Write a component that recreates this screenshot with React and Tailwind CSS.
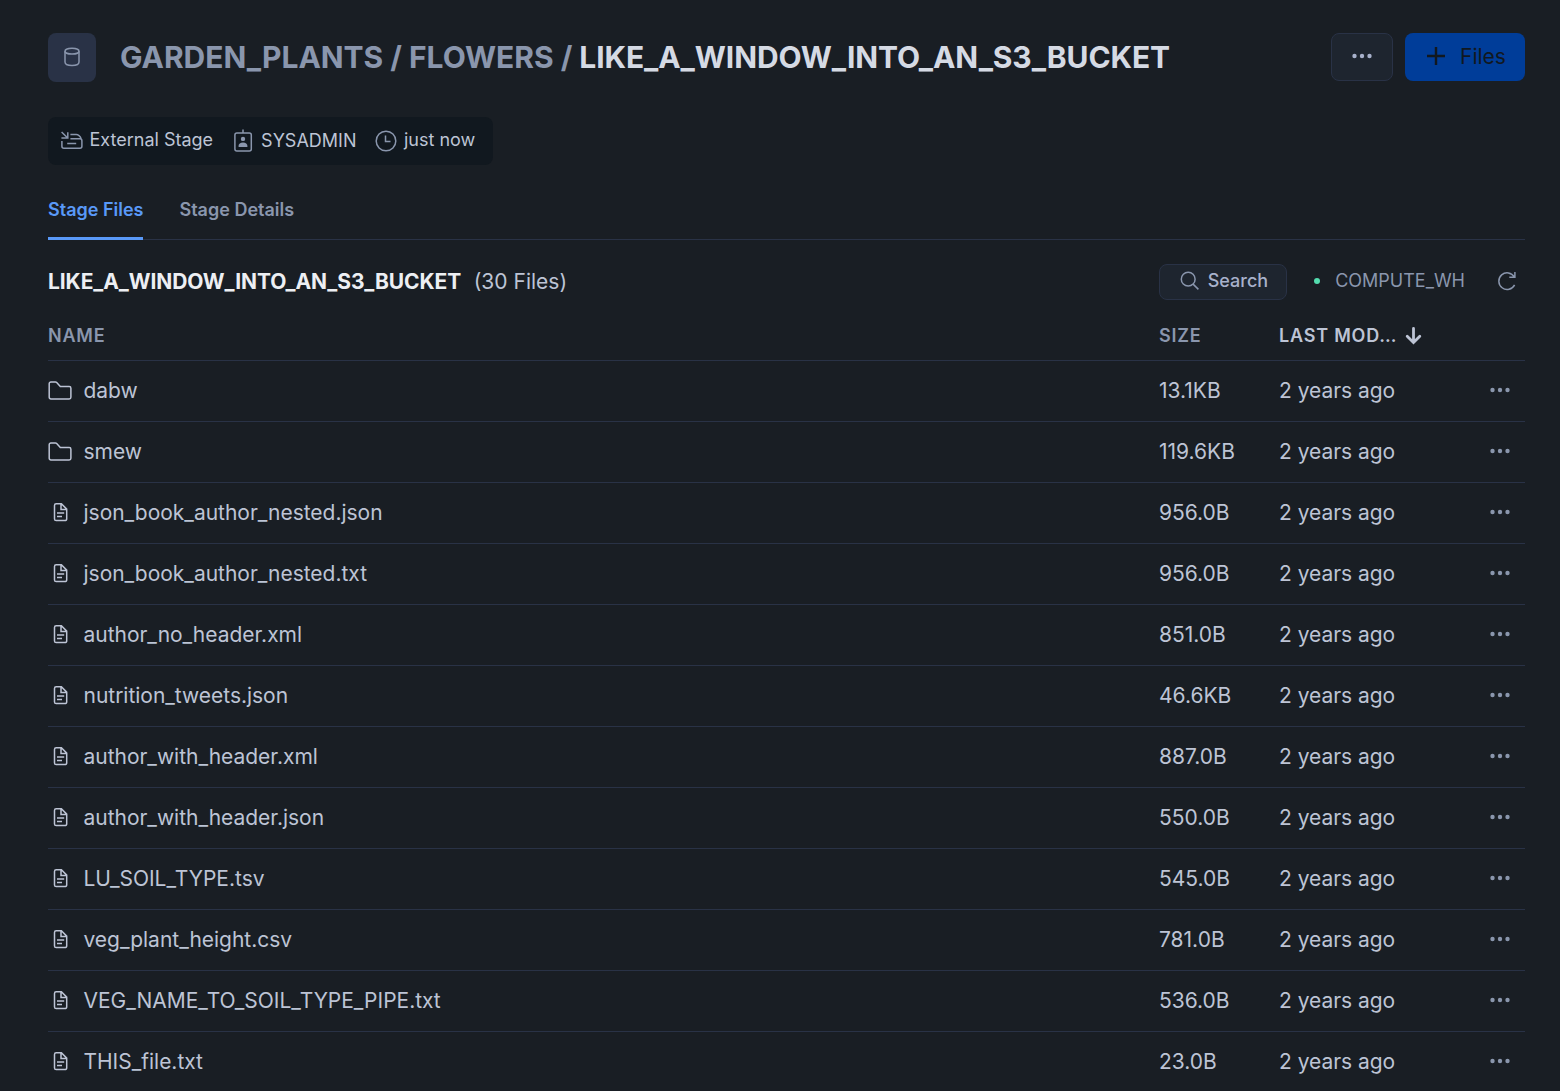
import React, { useState } from "react";

const FILES = [
  { name: "dabw", size: "13.1KB", folder: true },
  { name: "smew", size: "119.6KB", folder: true },
  { name: "json_book_author_nested.json", size: "956.0B" },
  { name: "json_book_author_nested.txt", size: "956.0B" },
  { name: "author_no_header.xml", size: "851.0B" },
  { name: "nutrition_tweets.json", size: "46.6KB" },
  { name: "author_with_header.xml", size: "887.0B" },
  { name: "author_with_header.json", size: "550.0B" },
  { name: "LU_SOIL_TYPE.tsv", size: "545.0B" },
  { name: "veg_plant_height.csv", size: "781.0B" },
  { name: "VEG_NAME_TO_SOIL_TYPE_PIPE.txt", size: "536.0B" },
  { name: "THIS_file.txt", size: "23.0B" },
];

const TABS = ["Stage Files", "Stage Details"];

function Icon({ children, className, strokeWidth = 1.5 }) {
  return (
    <svg
      width="24"
      height="24"
      viewBox="0 0 24 24"
      fill="none"
      stroke="currentColor"
      strokeWidth={strokeWidth}
      className={`shrink-0 ${className || ""}`}
    >
      {children}
    </svg>
  );
}

function Dots({ className }) {
  return (
    <Icon className={className}>
      <g fill="currentColor" stroke="none">
        <circle cx="4.5" cy="11" r="2.2" />
        <circle cx="12" cy="11" r="2.2" />
        <circle cx="19.5" cy="11" r="2.2" />
      </g>
    </Icon>
  );
}

function DatabaseIcon() {
  return (
    <Icon className="text-[#8a96ad]">
      <ellipse cx="12" cy="6.2" rx="7" ry="2.9" />
      <path d="M5 6.2v10.800c0 2.300 2.300 3.500 7 3.500s7-1.200 7-3.500V6.200" />
    </Icon>
  );
}

function StageIcon() {
  return (
    <Icon className="text-[#8a96ad]">
      <path d="M1.600 3 7.200 8.500M7.800 3.200v5.900H1.400M10.400 5.600h5.800c3 0 4 2 5 4.200M10.400 9.800h9.500a2 2 0 0 1 2 2v5.500a2 2 0 0 1-2 2H3.900a2 2 0 0 1-2-2v-5.300M7.200 14.500h9" />
    </Icon>
  );
}

function RoleIcon() {
  return (
    <Icon className="text-[#8a96ad]">
      <rect x="3.9" y="4" width="16.4" height="18" rx="2" />
      <path d="M12 .5V4" />
      <circle cx="12" cy="9.9" r="2.2" fill="currentColor" stroke="none" />
      <path d="M7.600 18v-1.200c0-1.800 1.700-3.200 4.400-3.200s4.400 1.400 4.400 3.200V18z" fill="currentColor" stroke="none" />
    </Icon>
  );
}

function ClockIcon() {
  return (
    <Icon className="text-[#8a96ad]">
      <circle cx="12" cy="12" r="9.8" />
      <path d="M11.5 6.500v6h5" />
    </Icon>
  );
}

function FolderIcon() {
  return (
    <Icon className="text-[#bdc4d5]">
      <path d="M1.200 18.200V4.700A1.700 1.700 0 0 1 2.900 3h4.600c.5 0 .9.200 1.200.5l3.600 4h8.900a1.700 1.700 0 0 1 1.700 1.700v9a1.700 1.700 0 0 1-1.700 1.700H2.900a1.700 1.700 0 0 1-1.700-1.700z" />
    </Icon>
  );
}

function FileIcon() {
  return (
    <Icon className="text-[#bdc4d5]">
      <path d="M8.200 2.800h5.200l5.300 5.300v9.800a1.700 1.700 0 0 1-1.700 1.700H8.200a1.700 1.700 0 0 1-1.700-1.700V4.500a1.700 1.700 0 0 1 1.700-1.700zM13 2.900v5.500h5.700M9 12h7.200M9 15.500h5" />
    </Icon>
  );
}

function FileRow({ file }) {
  return (
    <div className="flex h-[61px] shrink-0 items-center border-b border-[#293246] text-[21px] text-[#bdc4d5]">
      <div className="flex w-[1111px] items-center gap-[11.5px]">
        {file.folder ? <FolderIcon /> : <FileIcon />}
        <span className="tracking-[-0.02px]">{file.name}</span>
      </div>
      <span className="w-[120px]">{file.size}</span>
      <span className="flex-1 tracking-[-0.03px]">2 years ago</span>
      <button type="button" className="mr-[13px]">
        <Dots className="text-[#8a96ad]" />
      </button>
    </div>
  );
}

export default function App() {
  const [tab, setTab] = useState(TABS[0]);

  return (
    <main className="flex h-[1091px] w-[1560px] flex-col overflow-hidden bg-[#191e24] pl-12 pr-[35px] pt-[33px] font-['Inter',sans-serif]">
      <header className="flex h-12 shrink-0 items-center">
        <div className="flex h-[49px] w-12 items-center justify-center rounded-lg bg-[#293246]">
          <DatabaseIcon />
        </div>
        <h1 className="ml-6 flex-1 whitespace-pre text-[30px] font-bold tracking-[-0.03px] text-[#8a96ad]">
          GARDEN_PLANTS / FLOWERS / <span className="tracking-[-0.1px] text-[#d5dae4]">LIKE_A_WINDOW_INTO_AN_S3_BUCKET</span>
        </h1>
        <button type="button" className="flex h-12 w-[62px] items-center justify-center rounded-lg border border-[#293246] bg-[#1e252f]">
          <Dots className="text-[#a8b1cb]" />
        </button>
        <button type="button" className="ml-3 flex h-12 w-[120px] items-center rounded-lg bg-[#003d99] pl-[19px] text-[21px] text-[#11181f]">
          <Icon strokeWidth={2.4}>
            <path d="M12 2v18M3 11h18" />
          </Icon>
          <span className="ml-3">Files</span>
        </button>
      </header>

      <div className="mt-9 flex h-12 w-[445px] shrink-0 items-center rounded-lg bg-[#11181f] pl-3 text-[18px] text-[#bdc4d5]">
        <StageIcon />
        <span className="ml-[5.5px] pb-[3px]">External Stage</span>
        <span className="ml-[17.5px] flex">
          <RoleIcon />
        </span>
        <span className="ml-[6.5px] pb-px">SYSADMIN</span>
        <span className="ml-[17.5px] flex">
          <ClockIcon />
        </span>
        <span className="ml-[6px] pb-[3px]">just now</span>
      </div>

      <nav className="mt-[15px] flex h-[60px] shrink-0 gap-9 border-b border-[#293246] text-[18px] font-semibold">
        {TABS.map((t) => (
          <button
            key={t}
            type="button"
            onClick={() => setTab(t)}
            className={`h-[60px] border-b-3 pt-[2px] ${t === tab ? "border-[#5999f8] text-[#5999f8]" : "border-transparent text-[#8a96ad]"}`}
          >
            {t}
          </button>
        ))}
      </nav>

      <div className="mt-6 flex h-9 shrink-0 items-center">
        <h2 className="text-[21px] font-bold tracking-[-0.08px] text-[#edeff3]">LIKE_A_WINDOW_INTO_AN_S3_BUCKET</h2>
        <span className="ml-[12.5px] flex-1 text-[21px] text-[#bdc4d5]">(30 Files)</span>
        <button type="button" className="flex h-9 w-32 items-center rounded-lg border border-[#293246] bg-[#1e252f] pb-[3px] pl-[17px] text-[18px] font-medium text-[#a8b1cb]">
          <Icon className="text-[#8a96ad]">
            <circle cx="11.2" cy="10.2" r="6.9" />
            <path d="M16.100 15.100l5.300 5.300" />
          </Icon>
          <span className="ml-[6.5px]">Search</span>
        </button>
        <span className="mb-[2px] ml-[27px] h-[6px] w-[6px] rounded-full bg-[#53dcae]" />
        <span className="ml-[15px] pb-[3px] text-[18px] text-[#8a96ad]">COMPUTE_WH</span>
        <button type="button" className="mb-[2px] ml-[30px] mr-[6px]">
          <Icon className="text-[#8a96ad]">
            <path d="M19.300 7.900A8.300 8.300 0 1 0 19.600 15.800M19.900 3v5.300h-5.600" />
          </Icon>
        </button>
      </div>

      <div className="flex h-[61px] shrink-0 items-center border-b border-[#293246] pt-[11px] text-[18px] font-semibold tracking-[0.8px] text-[#8a96ad]">
        <span className="w-[1111px]">NAME</span>
        <span className="w-[120px]">SIZE</span>
        <span className="text-[#bdc4d5]">LAST MOD…</span>
        <Icon className="ml-[5px] text-[#bdc4d5]" strokeWidth={2.8}>
          <path strokeLinecap="round" d="M11.500 4.500v14M5.200 12.300l6.300 6.300 6.300-6.300" />
        </Icon>
      </div>

      {FILES.map((file) => (
        <FileRow key={file.name} file={file} />
      ))}
    </main>
  );
}
